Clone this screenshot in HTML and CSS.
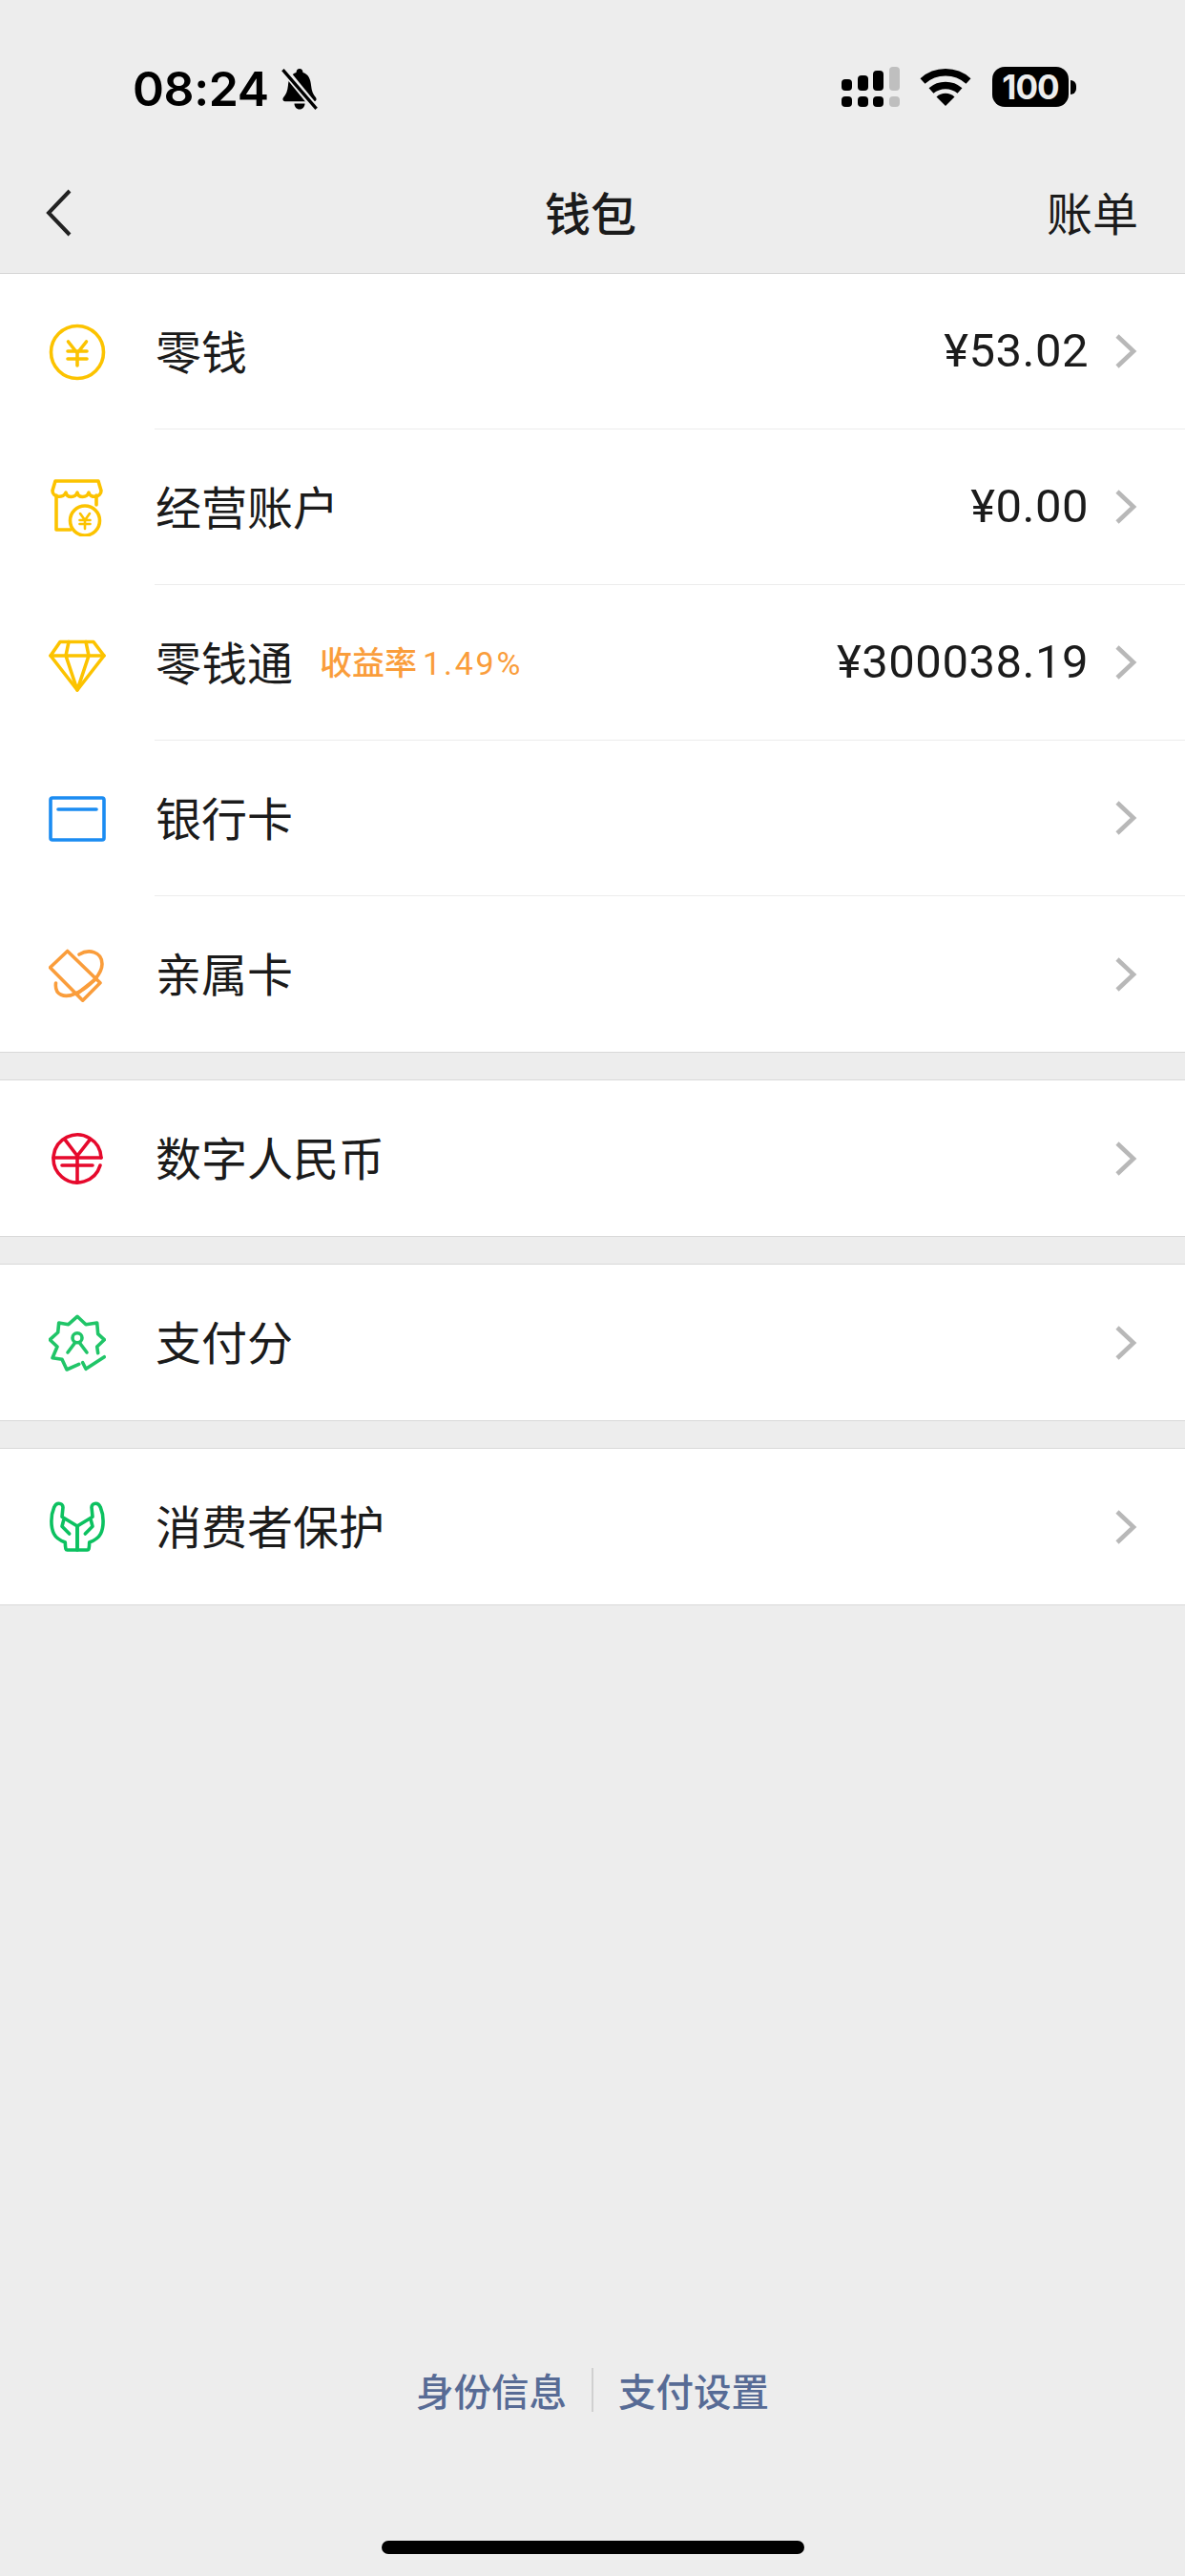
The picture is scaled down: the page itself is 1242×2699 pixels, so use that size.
FILE: index.html
```html
<!DOCTYPE html>
<html lang="zh-CN">
<head>
<meta charset="utf-8">
<title>钱包</title>
<link rel="stylesheet" href="styles.css">
</head>
<body>
<div class="page">
  <header class="top">
    <div class="status">
      <div class="status-left">
        <span class="time">08:24</span>
        <svg class="bell" viewBox="0 0 34 40">
          <path class="bell-body" d="M17 1c2 0 3 1.500 3.200 3.500C25.500 6 27.500 11 28 17c.4 5 2 8.500 4.500 11.500 1 1.500.5 3.500-1.500 3.500H3c-2 0-2.500-2-1.500-3.500C4 25.500 5.600 22 6 17c.5-6 2.500-11 7.800-12.500C14 2.500 15 1 17 1zM12 34h10c0 3-2 5.500-5 5.500S12 37 12 34z"/>
          <path class="bell-gap" d="M-1 -2L35 42"/>
          <path class="bell-slash" d="M1 2L33 39"/>
        </svg>
      </div>
      <div class="status-right">
        <svg class="signal" viewBox="0 0 61 42">
          <rect x="0" y="13" width="11" height="12" rx="4"/>
          <rect x="17" y="9" width="11" height="16" rx="4"/>
          <rect x="33" y="4" width="11" height="21" rx="4"/>
          <rect class="signal-off" x="50" y="0" width="11" height="25" rx="4"/>
          <rect x="0" y="31" width="11" height="11" rx="4"/>
          <rect x="17" y="31" width="11" height="11" rx="4"/>
          <rect x="33" y="31" width="11" height="11" rx="4"/>
          <rect class="signal-off" x="50" y="31" width="11" height="11" rx="4"/>
        </svg>
        <svg class="wifi" viewBox="0 0 54 41">
          <path class="wifi-arc" d="M3 15A36 36 0 0 1 51 15"/>
          <path class="wifi-arc" d="M12 25A23 23 0 0 1 42 25"/>
          <path d="M27 41L17.500 31.500A14 14 0 0 1 36.500 31.500Z"/>
        </svg>
        <div class="battery"><span class="battery-level">100</span></div>
        <span class="battery-nub"></span>
      </div>
    </div>
    <nav class="nav">
      <svg class="back" viewBox="0 0 28 50"><path d="M25 2L3 25L25 48"/></svg>
      <h1 class="nav-title">钱包</h1>
      <a class="nav-action">账单</a>
    </nav>
  </header>

  <main class="list">
    <section class="group group-first">
      <div class="row">
        <svg class="icon yellow" viewBox="0 0 60 60">
          <circle cx="30" cy="30" r="27.500"/>
          <path d="M20.500 19L30 31L39.500 19M20 29H40M20 37H40M30 31V44"/>
        </svg>
        <div class="row-body">
          <span class="label">零钱</span>
          <span class="amount">¥53.02</span>
          <svg class="chev" viewBox="0 0 24 38"><path d="M3 3L20 19L3 35"/></svg>
        </div>
      </div>
      <div class="row">
        <svg class="icon yellow" viewBox="0 0 60 60">
          <path d="M7 2H52L55 12C55 20 43 20 42 14C40 20 31 20 30 14C28 20 19 20 18 14C16 20 4 20 4 12Z"/>
          <path d="M8 17V53H23M50 17V27"/>
          <circle cx="38" cy="43.500" r="15.500"/>
          <path class="thin" d="M33 36L38 43L43 36M32.500 43H43.500M32.500 47H43.500M38 43V52"/>
        </svg>
        <div class="row-body">
          <span class="label">经营账户</span>
          <span class="amount">¥0.00</span>
          <svg class="chev" viewBox="0 0 24 38"><path d="M3 3L20 19L3 35"/></svg>
        </div>
      </div>
      <div class="row">
        <svg class="icon yellow" viewBox="0 0 60 60">
          <path d="M12 7.500H47L58 22L30 58L2 22Z"/>
          <path d="M2 22H58M21 7.500L18 22L30 58L42 22L39 7.500"/>
        </svg>
        <div class="row-body">
          <span class="label">零钱通</span>
          <span class="tag">收益率<span class="tag-num">1.49%</span></span>
          <span class="amount">¥300038.19</span>
          <svg class="chev" viewBox="0 0 24 38"><path d="M3 3L20 19L3 35"/></svg>
        </div>
      </div>
      <div class="row">
        <svg class="icon blue" viewBox="0 0 60 60">
          <rect x="2" y="8" width="56" height="44" rx="2"/>
          <path d="M10 20H50"/>
        </svg>
        <div class="row-body">
          <span class="label">银行卡</span>
          <svg class="chev" viewBox="0 0 24 38"><path d="M3 3L20 19L3 35"/></svg>
        </div>
      </div>
      <div class="row">
        <svg class="icon orange" viewBox="0 0 60 60">
          <path d="M1.500 22.800L19.700 5.500L54 38.800L35.700 57.200Z"/>
          <path d="M30 50L49 35"/>
          <path d="M32 9C42 3 56 6 56 19C56 30 42 44 28 50C17 55 6 52 7.500 39"/>
        </svg>
        <div class="row-body row-body-last">
          <span class="label">亲属卡</span>
          <svg class="chev" viewBox="0 0 24 38"><path d="M3 3L20 19L3 35"/></svg>
        </div>
      </div>
    </section>

    <section class="group">
      <div class="row">
        <svg class="icon red" viewBox="0 0 60 60">
          <path d="M55 29A25 25 0 1 0 54 37"/>
          <path d="M5 29H55M14 37H46M17.300 10.300L30 27L43 10.300M30 27V55"/>
        </svg>
        <div class="row-body row-body-last">
          <span class="label">数字人民币</span>
          <svg class="chev" viewBox="0 0 24 38"><path d="M3 3L20 19L3 35"/></svg>
        </div>
      </div>
    </section>

    <section class="group">
      <div class="row">
        <svg class="icon green" viewBox="0 0 60 60">
          <path d="M31.700 52.300L19 58L14 47.300L4 45.700L9 34L1.300 26.700L9.700 19L10.700 9L20.700 10.700L30 2.300L39 10.700L50.700 9L51.700 20.700L58.300 26.700L50.700 34L51.700 40.700"/>
          <circle cx="30" cy="24.700" r="5"/>
          <path d="M20 40L27.500 30M40 40L32.500 30"/>
          <path d="M35.700 50.700L39 57.300L58.300 44.700"/>
        </svg>
        <div class="row-body row-body-last">
          <span class="label">支付分</span>
          <svg class="chev" viewBox="0 0 24 38"><path d="M3 3L20 19L3 35"/></svg>
        </div>
      </div>
    </section>

    <section class="group">
      <div class="row">
        <svg class="icon green-2" viewBox="0 0 60 60">
          <path d="M30 29V54H19.500C18 54 17.500 53 17.300 46C12 44 8 42 5.500 37C2 30 2 18 5.700 9.300C7 6 9 5.300 10.700 5.300C13 5.300 15 7 15 9.300L14 19.300C20 23 25 26 30 29M15.700 22.700L14 29.300L21.700 37"/>
          <path class="mirror" d="M30 29V54H19.500C18 54 17.500 53 17.300 46C12 44 8 42 5.500 37C2 30 2 18 5.700 9.300C7 6 9 5.300 10.700 5.300C13 5.300 15 7 15 9.300L14 19.300C20 23 25 26 30 29M15.700 22.700L14 29.300L21.700 37"/>
        </svg>
        <div class="row-body row-body-last">
          <span class="label">消费者保护</span>
          <svg class="chev" viewBox="0 0 24 38"><path d="M3 3L20 19L3 35"/></svg>
        </div>
      </div>
    </section>
  </main>

  <footer class="foot">
    <div class="foot-links">
      <a class="foot-link">身份信息</a>
      <span class="foot-sep"></span>
      <a class="foot-link">支付设置</a>
    </div>
    <div class="home-bar"></div>
  </footer>
</div>
</body>
</html>
```

FILE: styles.css
```css
* { box-sizing: border-box; }

html, body {
  margin: 0;
  padding: 0;
  background: #ededed;
}

body {
  font-family: "Noto Sans CJK SC", "Noto Sans", sans-serif;
  color: #1b1b1b;
}

.page {
  display: flex;
  flex-direction: column;
  height: 2699px;
  overflow: hidden;
}

/* Header */
.top {
  height: 287px;
  border-bottom: 1px solid #d6d6d6;
  flex: none;
}

.status {
  height: 160px;
  padding: 70px 114px 0 139px;
  display: flex;
  justify-content: space-between;
  align-items: flex-start;
}

.status-left {
  display: flex;
  align-items: center;
  height: 46px;
  gap: 12px;
}

.time {
  font-family: Inter, Roboto, sans-serif;
  font-size: 50px;
  font-weight: 600;
  line-height: 46px;
  color: #000;
  letter-spacing: -0.4px;
}

.bell { width: 40px; height: 44px; }
.bell-body { fill: #000; }
.bell-gap { stroke: #ededed; stroke-width: 7; fill: none; }
.bell-slash { stroke: #000; stroke-width: 3; fill: none; }

.status-right {
  display: flex;
  align-items: flex-start;
}

.signal { width: 61px; height: 42px; fill: #000; margin-right: 21px; }
.signal-off { fill: #bfbfbf; }

.wifi { width: 54px; height: 41px; fill: #000; margin-right: 22px; }
.wifi-arc { fill: none; stroke: #000; stroke-width: 7.5; }

.battery {
  width: 80px;
  height: 42px;
  border-radius: 13px;
  background: #000;
  display: flex;
  align-items: center;
  justify-content: center;
}

.battery-level {
  font-family: Inter, Roboto, sans-serif;
  font-size: 35px;
  font-weight: 700;
  line-height: 42px;
  color: #ededed;
  letter-spacing: -1px;
}

.battery-nub {
  width: 6px;
  height: 15px;
  margin: 14px 0 0 2px;
  background: #000;
  border-radius: 0 8px 8px 0;
}

.nav {
  height: 126px;
  padding: 0 49px 0 45px;
  display: grid;
  grid-template-columns: 1fr auto 1fr;
  align-items: center;
}

.back {
  width: 28px;
  height: 50px;
  margin-left: 3px;
  fill: none;
  stroke: #222;
  stroke-width: 4;
}

.nav-title {
  margin: -5px 0 0;
  font-size: 48px;
  font-weight: 500;
  line-height: 60px;
  color: #1b1b1b;
}

.nav-action {
  justify-self: end;
  margin-top: -5px;
  font-size: 48px;
  line-height: 60px;
  color: #1b1b1b;
}

/* List */
.group {
  background: #fff;
  margin-top: 28px;
  border-top: 1px solid #d9d9d9;
  border-bottom: 1px solid #d9d9d9;
}

.group-first {
  margin-top: 0;
  border-top: 0;
}

.row {
  display: flex;
  align-items: center;
  height: 163px;
  padding-left: 51px;
}

.icon {
  width: 60px;
  height: 60px;
  flex: none;
  margin-right: 51px;
  fill: none;
  stroke-width: 3.6;
  stroke-linejoin: round;
  stroke-linecap: round;
}

.icon .thin { stroke-width: 2.6; }
.icon .mirror { transform: matrix(-1, 0, 0, 1, 60, 0); }

.yellow { stroke: #fcc300; }
.blue { stroke: #1b8cf2; }
.orange { stroke: #fa9d3b; }
.red { stroke: #e6092c; }
.green { stroke: #20c568; }
.green-2 { stroke: #0cc160; }

.row-body {
  flex: 1;
  height: 100%;
  display: flex;
  align-items: center;
  padding-right: 50px;
  border-bottom: 1px solid #ececec;
}

.row-body-last { border-bottom: 0; }

.label {
  margin-top: -5px;
  margin-left: 1px;
  font-size: 48px;
  line-height: 60px;
  color: #1b1b1b;
}

.tag {
  margin-left: 28px;
  font-size: 34px;
  font-weight: 500;
  line-height: 44px;
  color: #fa9d3b;
}

.tag-num {
  margin-left: 6px;
  font-family: Roboto, sans-serif;
  font-weight: 400;
  letter-spacing: 2.8px;
}

.amount {
  margin-left: auto;
  font-family: Roboto, sans-serif;
  font-size: 49px;
  line-height: 60px;
  letter-spacing: 0.5px;
  color: #1b1b1b;
}

.chev {
  width: 24px;
  height: 38px;
  margin-left: auto;
  fill: none;
  stroke: #b8b8b8;
  stroke-width: 4.6;
}

.amount + .chev { margin-left: 27px; }

/* Footer */
.foot {
  margin-top: auto;
  padding-bottom: 23px;
  display: flex;
  flex-direction: column;
  align-items: center;
}

.foot-links {
  display: flex;
  align-items: center;
  gap: 26px;
  margin-bottom: 135px;
}

.foot-link {
  font-size: 39.500px;
  font-weight: 500;
  line-height: 46px;
  color: #576b95;
}

.foot-sep {
  width: 2px;
  height: 46px;
  background: #d0d0d0;
}

.home-bar {
  width: 443px;
  height: 14px;
  border-radius: 7px;
  background: #000;
}
```
